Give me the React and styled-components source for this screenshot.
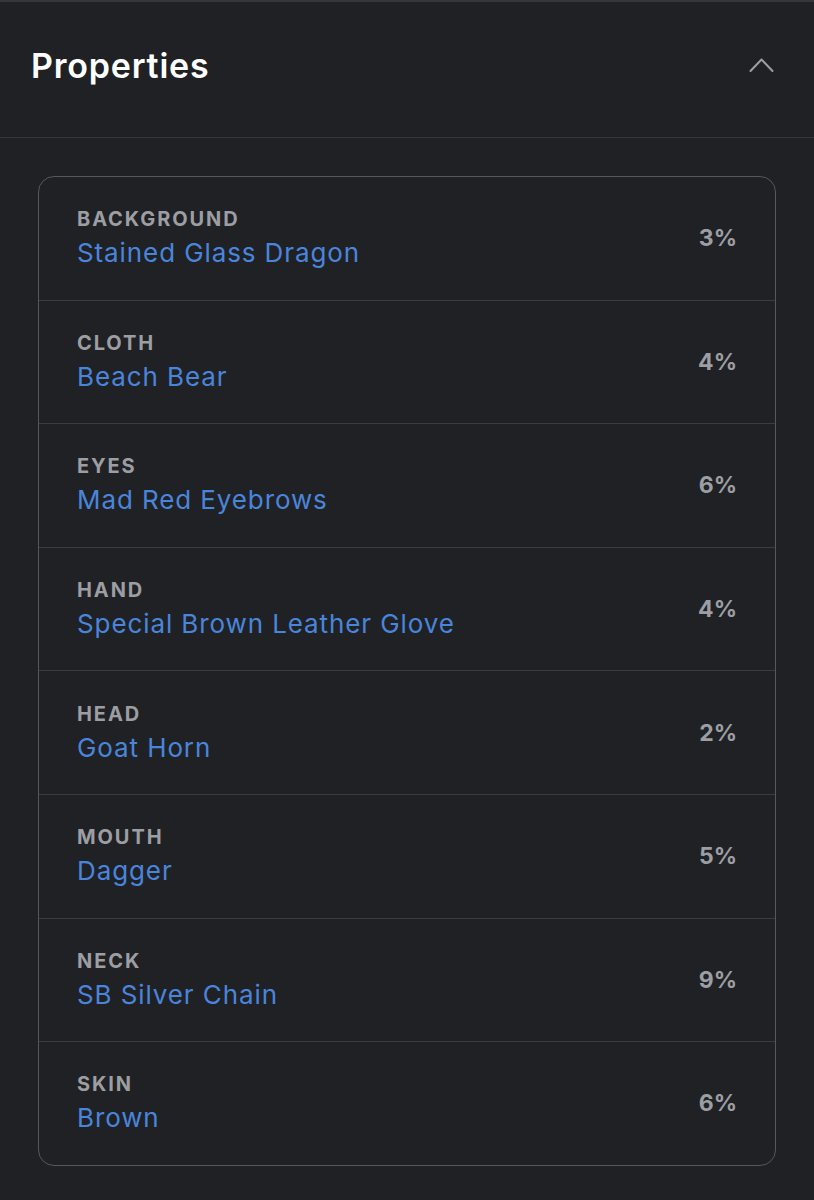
import React from "react";
import styled, { createGlobalStyle } from "styled-components";

const Global = createGlobalStyle`
  html, body { margin: 0; padding: 0; background: #202124; }
  body { font-family: Inter, "Noto Sans", sans-serif; }
`;

const Panel = styled.section`
  width: 814px;
  min-height: 1200px;
  background: #202124;
  border-top: 2px solid #35373b;
  box-sizing: border-box;
`;

const Header = styled.header`
  height: 136px;
  display: flex;
  align-items: center;
  justify-content: space-between;
  padding: 0 40px 9px 31px;
  border-bottom: 1px solid #35373b;
  box-sizing: border-box;
`;

const Title = styled.h2`
  margin: 0;
  color: #ffffff;
  font-size: 34px;
  font-weight: 600;
  letter-spacing: 0.8px;
`;

const Toggle = styled.button`
  background: none;
  border: 0;
  padding: 0;
  width: 25px;
  height: 16px;
  display: flex;
  align-items: center;
  justify-content: center;
  cursor: pointer;
`;

const Body = styled.div`
  padding: 38px 38px 36px;
`;

const Card = styled.div`
  border: 1px solid #55575c;
  border-radius: 16px;
  overflow: hidden;
`;

const Row = styled.div`
  height: 122.6px;
  display: flex;
  align-items: center;
  justify-content: space-between;
  padding: 0 38px;
  box-sizing: content-box;
  & + & { border-top: 1px solid #3a3c40; }
`;

const Info = styled.div`
  display: flex;
  flex-direction: column;
  gap: 4px;
`;

const Label = styled.div`
  color: #9c9ea3;
  font-size: 20px;
  font-weight: 700;
  line-height: 26px;
  letter-spacing: 1.9px;
`;

const Value = styled.div`
  color: #4a85dc;
  font-size: 26px;
  font-weight: 400;
  line-height: 34px;
  letter-spacing: 0.9px;
`;

const Percent = styled.div`
  color: #9c9ea3;
  font-size: 23px;
  font-weight: 700;
`;

const traits = [
  ["BACKGROUND", "Stained Glass Dragon", "3%"],
  ["CLOTH", "Beach Bear", "4%"],
  ["EYES", "Mad Red Eyebrows", "6%"],
  ["HAND", "Special Brown Leather Glove", "4%"],
  ["HEAD", "Goat Horn", "2%"],
  ["MOUTH", "Dagger", "5%"],
  ["NECK", "SB Silver Chain", "9%"],
  ["SKIN", "Brown", "6%"],
];

export default function App() {
  return (
    <>
      <Global />
      <Panel>
        <Header>
          <Title>Properties</Title>
          <Toggle aria-label="Collapse">
            <svg width="25" height="16" viewBox="0 0 25 16" fill="none">
              <path d="M1.5 14 L12.5 2.5 L23.5 14" stroke="#9c9ea3" strokeWidth="2" strokeLinecap="round" strokeLinejoin="round" />
            </svg>
          </Toggle>
        </Header>
        <Body>
          <Card>
            {traits.map(([l, v, p]) => (
              <Row key={l}>
                <Info>
                  <Label>{l}</Label>
                  <Value>{v}</Value>
                </Info>
                <Percent>{p}</Percent>
              </Row>
            ))}
          </Card>
        </Body>
      </Panel>
    </>
  );
}
